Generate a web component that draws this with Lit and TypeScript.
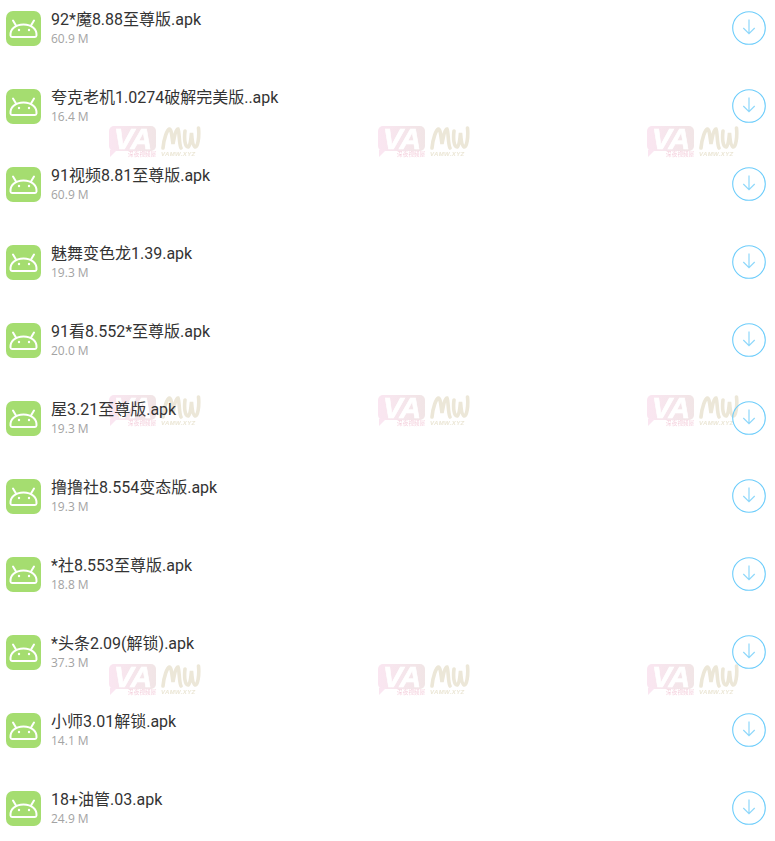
import { LitElement, html, css, svg } from "lit";
import { customElement } from "lit/decorators.js";

const files: [string, string][] = [
  ["92*魔8.88至尊版.apk", "60.9 M"],
  ["夸克老机1.0274破解完美版..apk", "16.4 M"],
  ["91视频8.81至尊版.apk", "60.9 M"],
  ["魅舞变色龙1.39.apk", "19.3 M"],
  ["91看8.552*至尊版.apk", "20.0 M"],
  ["屋3.21至尊版.apk", "19.3 M"],
  ["撸撸社8.554变态版.apk", "19.3 M"],
  ["*社8.553至尊版.apk", "18.8 M"],
  ["*头条2.09(解锁).apk", "37.3 M"],
  ["小师3.01解锁.apk", "14.1 M"],
  ["18+油管.03.apk", "24.9 M"],
];

const android = svg`<svg class="android" viewBox="0 0 35 35" width="35" height="35">
  <rect width="35" height="35" rx="7" fill="#a5dd70"/>
  <path d="M4.500 24.500c-.5-6 4.500-11 13-11s13.500 5 13 11c-.1.900-.8 1.400-1.500 1.400H6c-.7 0-1.400-.5-1.500-1.400z" fill="none" stroke="#fff" stroke-width="2"/>
  <path d="M10 14.500 7 9.500M25 14.500l3-5" fill="none" stroke="#fff" stroke-width="2" stroke-linecap="round"/>
  <circle cx="13" cy="19" r="1.200" fill="#fff"/><circle cx="23" cy="19" r="1.200" fill="#fff"/>
</svg>`;

const arrow = svg`<svg viewBox="0 0 35 35" width="35" height="35">
  <circle cx="18" cy="17" r="16.300" fill="none" stroke="#6dcdfb" stroke-width="1.100"/>
  <path d="M18 8.500v14.200M12.300 17l5.700 5.700 5.700-5.700" fill="none" stroke="#8fd8fb" stroke-width="1.200"/>
</svg>`;

@customElement("app-root")
export class AppRoot extends LitElement {
  static styles = css`
    :host { display: block; position: relative; width: 775px; height: 841px; overflow: hidden; background: #fff;
      font-family: Roboto, "Noto Sans CJK SC", sans-serif; }
    .list { position: relative; display: flex; flex-direction: column; }
    .row { display: flex; height: 78px; padding: 11px 9px 0 6px; box-sizing: border-box; }
    .android { flex: none; }
    .info { flex: 1; margin-left: 10px; margin-top: -3px; }
    .name { font-size: 16px; line-height: 24px; color: #333; white-space: nowrap; }
    .size { font-size: 12px; line-height: 16px; margin-top: -1px; color: #a3a3a3; font-family: "Open Sans", sans-serif; }
    .dl { flex: none; }
    .marks { position: absolute; left: 109px; top: 126px; display: grid; grid-template-columns: repeat(3, 269px); grid-auto-rows: 269px; }
    .mark { display: flex; gap: 5px; width: 93px; height: 34px; filter: blur(.5px); }
    .va { position: relative; width: 47px; height: 25px; background: linear-gradient(90deg, #fae6f1, #f1e5e6); border-radius: 5px;
      font: italic 700 30px/25px "Liberation Sans", sans-serif; color: #fff; text-align: center; letter-spacing: -1px; -webkit-text-stroke: .6px #fff; }
    .va::after { content: ""; position: absolute; left: 1px; top: 24px; border-top: 7px solid #fae6f1; border-right: 7px solid transparent; }
    .vs { position: absolute; left: 19px; top: 25px; font: 400 5.500px/7px "Noto Sans CJK SC", sans-serif; color: #f4cfdc; white-space: nowrap; letter-spacing: .2px; -webkit-text-stroke: 0; }
    .mw { position: relative; width: 40px; }
    .mw svg { display: block; }
    .ms { position: absolute; left: 0; top: 25px; font: italic 700 6px/7px "Liberation Sans", sans-serif; color: #ebe6d5; white-space: nowrap; letter-spacing: .4px; }
  `;

  render() {
    const marks = Array.from({ length: 9 }, () => html`<div class="mark">
      <div class="va">VA<span class="vs">深夜视频屋</span></div>
      <div class="mw">
        <svg width="40" height="25" viewBox="0 0 40 25"><path d="M2 22C3 12 6 4 8.500 3c2 0 2.500 9 3.500 15C13.500 10 15 3 17 3c1.500 3 1 15 3 19M24 5c-1 8 0 16 3 16 2 0 3-8 3.500-14 .5 6 1.500 14 4 14 2 0 4-9 3-19" fill="none" stroke="#ece7d8" stroke-width="3.600" stroke-linecap="round"/></svg>
        <span class="ms">VAMW.XYZ</span>
      </div>
    </div>`);
    return html`
      <div class="marks">${marks}</div>
      <div class="list">
        ${files.map(([n, s]) => html`<div class="row">
          ${android}
          <div class="info"><div class="name">${n}</div><div class="size">${s}</div></div>
          <div class="dl">${arrow}</div>
        </div>`)}
      </div>`;
  }
}
